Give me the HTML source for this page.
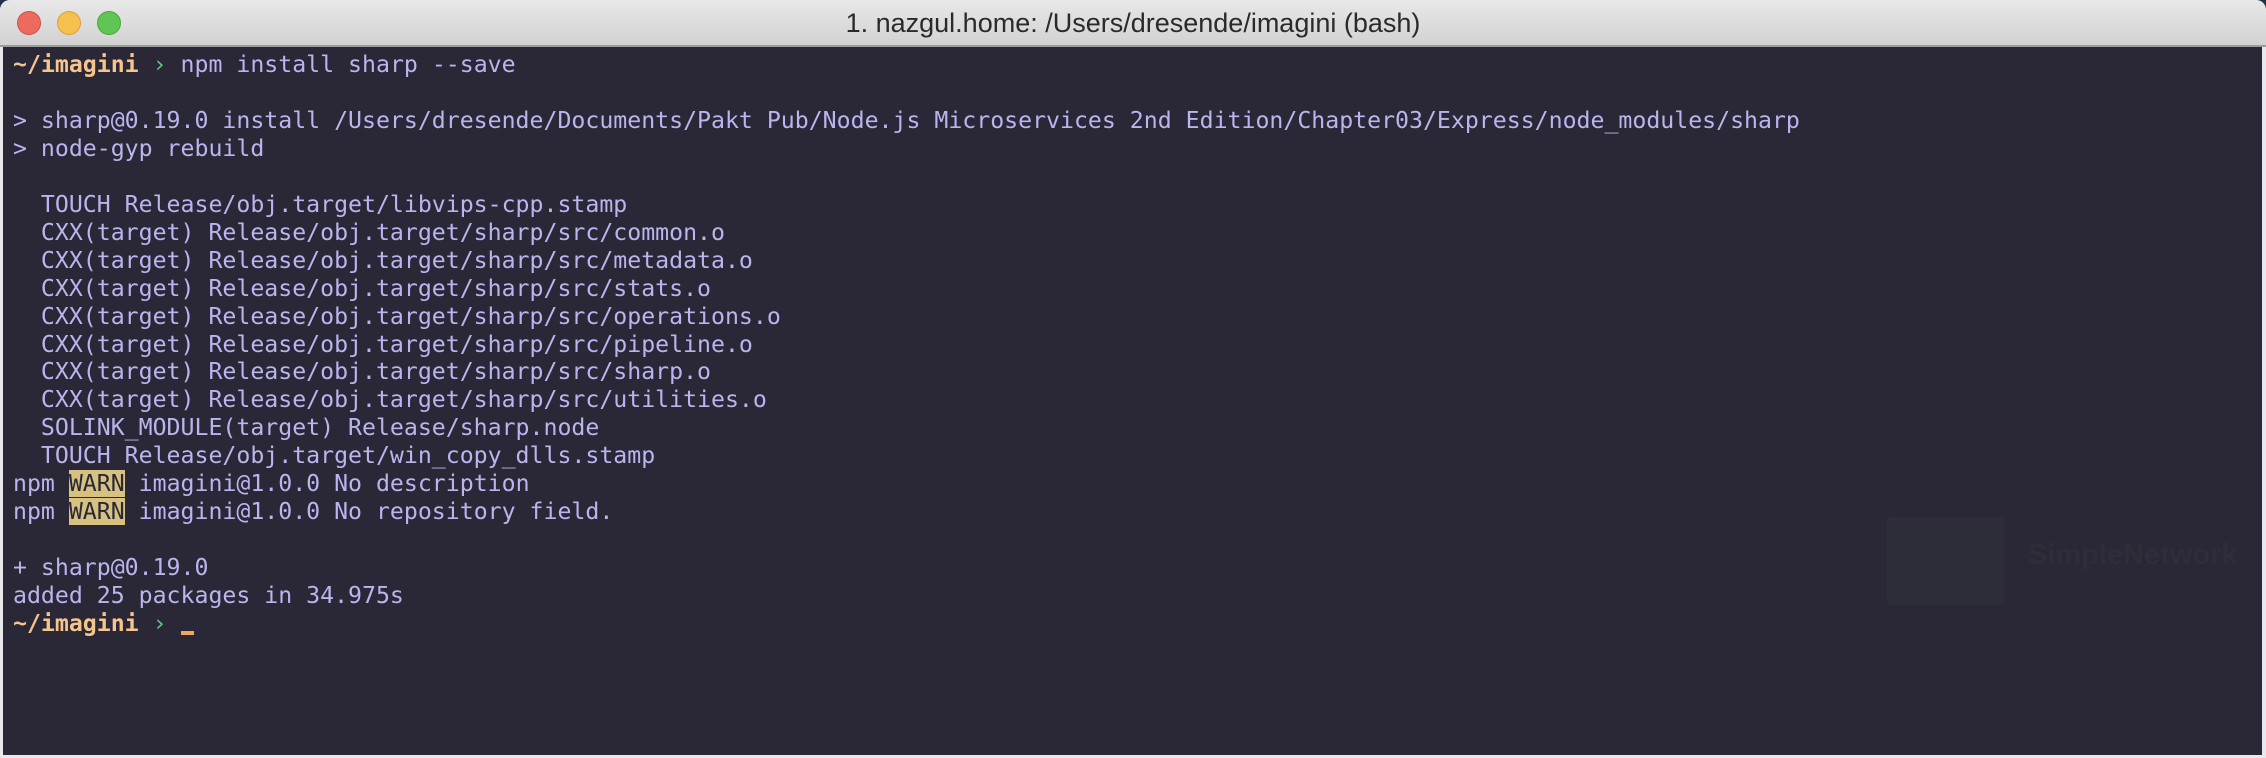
<!DOCTYPE html>
<html><head><meta charset="utf-8"><style>
html,body{margin:0;padding:0;}
body{width:2266px;height:758px;background:#1d3347;position:relative;overflow:hidden;}
.win{position:absolute;left:0;top:0;width:2266px;height:758px;border-radius:10px 10px 0 0;overflow:hidden;background:#e9e9ec;}
.title{position:absolute;left:0;top:0;width:2266px;height:45px;background:linear-gradient(#e8e8e8,#d2d2d2);border-bottom:2px solid #9b9b9b;}
.dot{position:absolute;top:11px;width:24px;height:24px;border-radius:50%;box-sizing:border-box;}
.ttl{position:absolute;left:0;width:2266px;top:0;line-height:46px;text-align:center;font-family:"Liberation Sans",sans-serif;font-size:27px;color:#2a2a2a;}
.term{position:absolute;left:3px;top:47px;width:2259px;height:708px;background:#2a2836;}
pre{position:absolute;left:10px;top:4px;margin:0;font-family:"DejaVu Sans Mono",monospace;font-size:23.2px;line-height:27.96px;color:#b9b5ee;white-space:pre;}
.p{color:#f6c48d;font-weight:bold;}
.g{color:#5fc87a;}
.w{background:#d7c181;color:#2a2836;}
.cur{display:inline-block;width:13px;height:4px;background:#f3a858;vertical-align:-4px;}
.wm{position:absolute;left:2025px;top:492px;font-family:"Liberation Sans",sans-serif;font-weight:bold;font-size:29px;color:#2f2d3a;}
.fold{position:absolute;left:1884px;top:470px;width:117px;height:88px;background:#2d2c39;border-radius:3px;}
</style></head><body>
<div class="win">
<div class="title">
<div class="dot" style="left:17px;background:#ec6a5e;border:1px solid #d0504a"></div>
<div class="dot" style="left:57px;background:#f5c04f;border:1px solid #d9a23a"></div>
<div class="dot" style="left:97px;background:#61c554;border:1px solid #4aa73c"></div>
<div class="ttl">1. nazgul.home: /Users/dresende/imagini (bash)</div>
</div>
<div class="term">
<div class="fold"></div>
<div class="wm">SimpleNetwork</div>
<pre><span class="p">~/imagini</span> <span class="g">›</span> npm install sharp --save

&gt; sharp@0.19.0 install /Users/dresende/Documents/Pakt Pub/Node.js Microservices 2nd Edition/Chapter03/Express/node_modules/sharp
&gt; node-gyp rebuild

  TOUCH Release/obj.target/libvips-cpp.stamp
  CXX(target) Release/obj.target/sharp/src/common.o
  CXX(target) Release/obj.target/sharp/src/metadata.o
  CXX(target) Release/obj.target/sharp/src/stats.o
  CXX(target) Release/obj.target/sharp/src/operations.o
  CXX(target) Release/obj.target/sharp/src/pipeline.o
  CXX(target) Release/obj.target/sharp/src/sharp.o
  CXX(target) Release/obj.target/sharp/src/utilities.o
  SOLINK_MODULE(target) Release/sharp.node
  TOUCH Release/obj.target/win_copy_dlls.stamp
npm <span class="w">WARN</span> imagini@1.0.0 No description
npm <span class="w">WARN</span> imagini@1.0.0 No repository field.

+ sharp@0.19.0
added 25 packages in 34.975s
<span class="p">~/imagini</span> <span class="g">›</span> <span class="cur"></span></pre>
</div>
</div>
</body></html>
